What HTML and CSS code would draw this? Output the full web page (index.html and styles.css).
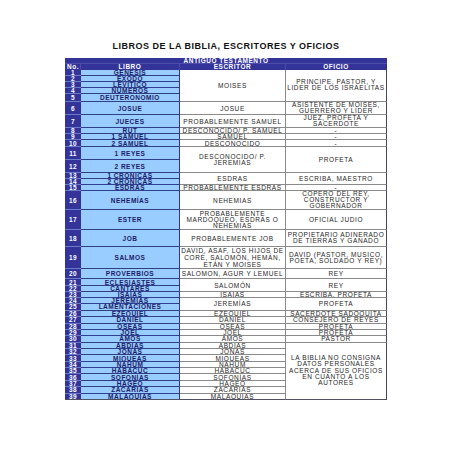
FILE: index.html
```html
<!DOCTYPE html>
<html lang="es">
<head>
<meta charset="utf-8">
<title>Libros de la Biblia</title>
<link rel="stylesheet" href="styles.css">
</head>
<body>
<div class="page">
  <h1 class="title">LIBROS DE LA BIBLIA, ESCRITORES Y OFICIOS</h1>
  <table class="books">
    <colgroup>
      <col class="c-no"><col class="c-libro"><col class="c-esc"><col class="c-of">
    </colgroup>
    <tr class="r-top"><td class="top" colspan="4">ANTIGUO TESTAMENTO</td></tr>
    <tr class="r-head">
      <td class="hd hd-no">No.</td><td class="hd">LIBRO</td><td class="hd">ESCRITOR</td><td class="hd hd-last">OFICIO</td>
    </tr>
    <tr class="h57"><td class="no">1</td><td class="lib">GENESIS</td><td class="txt" rowspan="5">MOISES</td><td class="txt of multi" rowspan="5">PRINCIPE, PASTOR, Y<br>LIDER DE LOS ISRAELITAS</td></tr>
    <tr class="h57"><td class="no">2</td><td class="lib">EXODO</td></tr>
    <tr class="h57"><td class="no">3</td><td class="lib">LEVITICO</td></tr>
    <tr class="h59"><td class="no">4</td><td class="lib">NUMEROS</td></tr>
    <tr class="h84"><td class="no">5</td><td class="lib">DEUTERONOMIO</td></tr>
    <tr class="h133"><td class="no">6</td><td class="lib">JOSUE</td><td class="txt">JOSUE</td><td class="txt of multi">ASISTENTE DE MOISES,<br>GUERRERO Y LÍDER</td></tr>
    <tr class="h127"><td class="no">7</td><td class="lib">JUECES</td><td class="txt">PROBABLEMENTE SAMUEL</td><td class="txt of multi">JUEZ, PROFETA Y<br>SACERDOTE</td></tr>
    <tr class="h56"><td class="no">8</td><td class="lib">RUT</td><td class="txt">DESCONOCIDO/ P. SAMUEL</td><td class="txt of">-</td></tr>
    <tr class="h60"><td class="no">9</td><td class="lib">1 SAMUEL</td><td class="txt">SAMUEL</td><td class="txt of">-</td></tr>
    <tr class="h67"><td class="no">10</td><td class="lib">2 SAMUEL</td><td class="txt">DESCONOCIDO</td><td class="txt of">-</td></tr>
    <tr class="h130"><td class="no">11</td><td class="lib">1 REYES</td><td class="txt multi" rowspan="2">DESCONOCIDO/ P.<br>JEREMIAS</td><td class="txt of" rowspan="2">PROFETA</td></tr>
    <tr class="h130"><td class="no">12</td><td class="lib">2 REYES</td></tr>
    <tr class="h60"><td class="no">13</td><td class="lib">1 CRÓNICAS</td><td class="txt" rowspan="2">ESDRAS</td><td class="txt of" rowspan="2">ESCRIBA, MAESTRO</td></tr>
    <tr class="h60"><td class="no">14</td><td class="lib">2 CRÓNICAS</td></tr>
    <tr class="h60"><td class="no">15</td><td class="lib">ESDRAS</td><td class="txt">PROBABLEMENTE ESDRAS</td><td class="txt of">-</td></tr>
    <tr class="h193"><td class="no">16</td><td class="lib">NEHEMÍAS</td><td class="txt">NEHEMIAS</td><td class="txt of multi">COPERO DEL REY,<br>CONSTRUCTOR Y<br>GOBERNADOR</td></tr>
    <tr class="h194"><td class="no">17</td><td class="lib">ESTER</td><td class="txt multi">PROBABLEMENTE<br>MARDOQUEO, ESDRAS O<br>NEHEMIAS</td><td class="txt of">OFICIAL JUDIO</td></tr>
    <tr class="h173"><td class="no">18</td><td class="lib">JOB</td><td class="txt">PROBABLEMENTE JOB</td><td class="txt of multi">PROPIETARIO ADINERADO<br>DE TIERRAS Y GANADO</td></tr>
    <tr class="h223"><td class="no">19</td><td class="lib">SALMOS</td><td class="txt loose">DAVID, ASAF, LOS HIJOS DE<br>CORÉ, SALOMÓN, HEMÁN,<br>ETÁN Y MOISES</td><td class="txt of multi">DAVID (PASTOR, MUSICO,<br>POETA, SOLDADO Y REY)</td></tr>
    <tr class="h100"><td class="no">20</td><td class="lib">PROVERBIOS</td><td class="txt">SALOMON, AGUR Y LEMUEL</td><td class="txt of">REY</td></tr>
    <tr class="h63"><td class="no">21</td><td class="lib">ECLESIASTES</td><td class="txt" rowspan="2">SALOMÓN</td><td class="txt of" rowspan="2">REY</td></tr>
    <tr class="h61"><td class="no">22</td><td class="lib">CANTARES</td></tr>
    <tr class="h60"><td class="no">23</td><td class="lib">ISAÍAS</td><td class="txt">ISAÍAS</td><td class="txt of">ESCRIBA, PROFETA</td></tr>
    <tr class="h60"><td class="no">24</td><td class="lib">JEREMÍAS</td><td class="txt" rowspan="2">JEREMÍAS</td><td class="txt of" rowspan="2">PROFETA</td></tr>
    <tr class="h70"><td class="no">25</td><td class="lib">LAMENTACIONES</td></tr>
    <tr class="h64"><td class="no">26</td><td class="lib">EZEQUIEL</td><td class="txt">EZEQUIEL</td><td class="txt of">SACERDOTE SADOQUITA</td></tr>
    <tr class="h64"><td class="no">27</td><td class="lib">DANIEL</td><td class="txt">DANIEL</td><td class="txt of">CONSEJERO DE REYES</td></tr>
    <tr class="h64"><td class="no">28</td><td class="lib">OSEAS</td><td class="txt">OSEAS</td><td class="txt of">PROFETA</td></tr>
    <tr class="h64"><td class="no">29</td><td class="lib">JOEL</td><td class="txt">JOEL</td><td class="txt of">PROFETA</td></tr>
    <tr class="h64"><td class="no">30</td><td class="lib">AMÓS</td><td class="txt">AMÓS</td><td class="txt of">PASTOR</td></tr>
    <tr class="h64"><td class="no">31</td><td class="lib">ABDÍAS</td><td class="txt">ABDÍAS</td><td class="txt of loose2 last" rowspan="9">LA BIBLIA NO CONSIGNA<br>DATOS PERSONALES<br>ACERCA DE SUS OFICIOS<br>EN CUANTO A LOS<br>AUTORES</td></tr>
    <tr class="h64"><td class="no">32</td><td class="lib">JONÁS</td><td class="txt">JONÁS</td></tr>
    <tr class="h64"><td class="no">33</td><td class="lib">MIQUEAS</td><td class="txt">MIQUEAS</td></tr>
    <tr class="h64"><td class="no">34</td><td class="lib">NAHUM</td><td class="txt">NAHÚM</td></tr>
    <tr class="h64"><td class="no">35</td><td class="lib">HABACUC</td><td class="txt">HABACUC</td></tr>
    <tr class="h64"><td class="no">36</td><td class="lib">SOFONÍAS</td><td class="txt">SOFONÍAS</td></tr>
    <tr class="h64"><td class="no">37</td><td class="lib">HAGEO</td><td class="txt">HAGEO</td></tr>
    <tr class="h64"><td class="no">38</td><td class="lib">ZACARÍAS</td><td class="txt">ZACARÍAS</td></tr>
    <tr class="h64"><td class="no last">39</td><td class="lib last">MALAQUÍAS</td><td class="txt last">MALAQUÍAS</td></tr>
  </table>
</div>
</body>
</html>
```
FILE: styles.css
```css
html, body {
  margin: 0;
  padding: 0;
  background: #ffffff;
}

.page {
  width: 452px;
  padding-top: 40.5px;
  font-family: "Liberation Sans", Arial, sans-serif;
}

.title {
  margin: 0 0 7.3px 0;
  font-size: 9px;
  line-height: 10px;
  font-weight: bold;
  letter-spacing: 0.5px;
  text-align: center;
  color: #111111;
}

.books {
  margin: 0 auto;
  width: 322px;
  table-layout: fixed;
  border-collapse: separate;
  border-spacing: 0;
  font-size: 6.5px;
  line-height: 5px;
  letter-spacing: 0.6px;
  white-space: nowrap;
}

.c-no { width: 16px; }
.c-libro { width: 99px; }
.c-esc { width: 106px; }
.c-of { width: 101px; }

.books td {
  padding: 0;
  text-align: center;
  vertical-align: middle;
  overflow: hidden;
}

.r-top { height: 6px; }
.r-head { height: 6px; }

.top {
  background: #333399;
  color: #ffffff;
  font-weight: bold;
  letter-spacing: 0.5px;
  border-bottom: 1px solid #4d4dab;
}

.hd {
  background: #333399;
  color: #ffffff;
  font-weight: bold;
  letter-spacing: 0.5px;
  border-right: 1px solid #4d4dab;
  border-bottom: 1px solid #333399;
}

.books td.hd-no {
  text-align: left;
  padding-left: 2px;
}

.hd-last { border-right: 1px solid #333366; }

.no {
  background: #333399;
  color: #ffffff;
  font-weight: bold;
  letter-spacing: 0.3px;
  border-bottom: 1px solid #6a7cc8;
}

.lib {
  background: #99ccff;
  color: #1c1c66;
  font-weight: bold;
  letter-spacing: 0.5px;
  border-bottom: 1px solid #2f3f8f;
  border-right: 1px solid #333399;
}

.txt {
  background: #ffffff;
  color: #262626;
  border-bottom: 1px solid #8a8a8a;
  border-right: 1px solid #8a8a8a;
}

.txt.of { border-right: 1px solid #444466; }

.multi { line-height: 6px; }
.loose { line-height: 7px; }
.loose2 { line-height: 6.2px; }

.books td.last { border-bottom: 1px solid #505060; }

.h56 { height: 5.6px; }
.h57 { height: 5.7px; }
.h59 { height: 5.9px; }
.h60 { height: 6px; }
.h61 { height: 6.1px; }
.h63 { height: 6.3px; }
.h64 { height: 6.36px; }
.h67 { height: 6.7px; }
.h70 { height: 7px; }
.h84 { height: 8.4px; }
.h100 { height: 10px; }
.h127 { height: 12.7px; }
.h130 { height: 13px; }
.h133 { height: 13.3px; }
.h173 { height: 17.3px; }
.h193 { height: 19.3px; }
.h194 { height: 19.4px; }
.h223 { height: 22.3px; }
```
